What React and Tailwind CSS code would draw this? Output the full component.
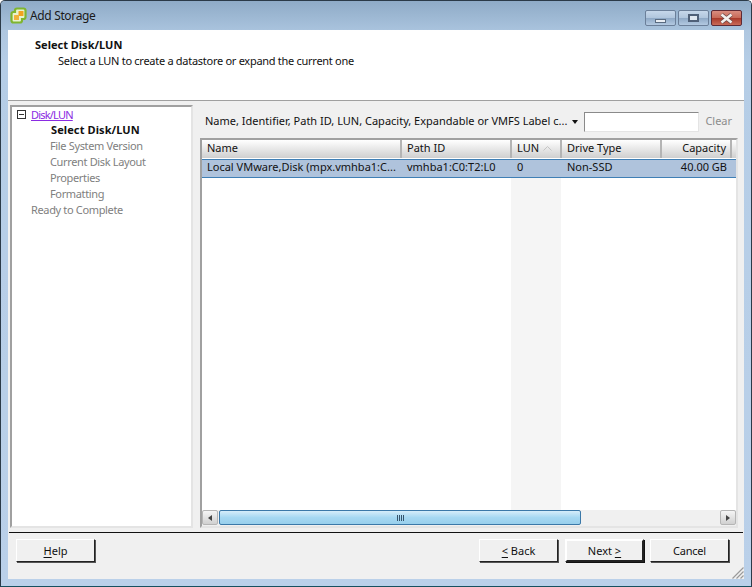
const font = { fontFamily: '"Noto Sans", sans-serif' };

function Mnemonic({ children }) {
  return <span className="underline underline-offset-2">{children}</span>;
}

function WizardButton({ children, isDefault, className = "" }) {
  return (
    <button
      className={`h-[23px] w-[79px] bg-[#f0f0f0] text-[11px] text-[#111] border border-t-white border-l-white border-r-[#222] border-b-[#222] ${
        isDefault ? "border-2 border-t-[#111] border-l-[#111] border-r-[#111] border-b-[#111] shadow-[1px_1px_0_#111]" : "shadow-[1px_1px_0_#555]"
      } ${className}`}
    >
      {children}
    </button>
  );
}

function VmIcon() {
  return (
    <svg width="17" height="17" viewBox="0 0 17 17">
      <path
        d="M7 1.5 H13.5 Q15.5 1.5 15.5 3.5 V10 Q15.5 12 13.5 12 H12 V13.5 Q12 15.5 10 15.5 H3.5 Q1.5 15.5 1.5 13.5 V7 Q1.5 5 3.5 5 H5 V3.5 Q5 1.5 7 1.5 Z"
        fill="#e9f3cf"
        stroke="#7fb52f"
        strokeWidth="2.2"
      />
      <rect x="8.5" y="4" width="5" height="5" rx="0.5" fill="#f2a31f" />
      <rect x="4" y="8" width="5" height="5" rx="0.5" fill="#f0b23c" />
    </svg>
  );
}

function TitleButton({ red, children }) {
  return (
    <div
      className={`h-[16px] w-[31px] flex items-center justify-center rounded-[2px] border ${
        red
          ? "border-[#5e2a35] bg-[linear-gradient(#d98d80,#c86a58_48%,#a93a2b_52%,#c96a58)]"
          : "border-[#6b7f99] bg-[linear-gradient(#c6d7ea,#b1c6dd_48%,#8fa9c6_52%,#b3c9e1)]"
      }`}
    >
      {children}
    </div>
  );
}

const columns = [
  { name: "Name", width: "w-[200px]" },
  { name: "Path ID", width: "w-[110px]" },
  { name: "LUN", width: "w-[50px]", sorted: true },
  { name: "Drive Type", width: "w-[100px]" },
  { name: "Capacity", width: "w-[70px]", right: true },
];

const steps = ["File System Version", "Current Disk Layout", "Properties", "Formatting"];

export default function App() {
  return (
    <div
      style={font}
      className="relative w-[752px] h-[587px] flex flex-col border border-[#2b3a48] border-b-[#17505f] rounded-t-[5px] bg-[linear-gradient(#a9c1da,#b5cde6_60px,#bad0e9)] overflow-hidden text-[11px] leading-[16px] text-[#111]"
    >
      {/* title bar */}
      <div className="h-[29px] shrink-0 flex items-center pl-[9px] pr-[9px] bg-[linear-gradient(#8fabc7,#a9c3dd)]">
        <VmIcon />
        <span className="ml-[3px] text-[12px] tracking-[-0.35px] text-[#1a1a1a]">Add Storage</span>
        <div className="ml-auto flex gap-[2px] self-start mt-[9px]">
          <TitleButton>
            <div className="w-[11px] h-[4px] mt-[5px] bg-[#e8edf3] border border-[#5a6b80]" />
          </TitleButton>
          <TitleButton>
            <div className="w-[11px] h-[8px] border-2 border-[#4f6078] bg-[#dfe7f0]" />
          </TitleButton>
          <TitleButton red>
            <svg width="15" height="11" viewBox="0 0 15 11">
              <path d="M2.5 1.5 L12.5 9.5 M12.5 1.5 L2.5 9.5" stroke="#6b4a4a" strokeWidth="4" />
              <path d="M2.5 1.5 L12.5 9.5 M12.5 1.5 L2.5 9.5" stroke="#f4f0ee" strokeWidth="2.6" />
            </svg>
          </TitleButton>
        </div>
      </div>

      {/* client area */}
      <div className="flex-1 mx-[7px] mb-[7px] flex flex-col bg-[#f0f0f0] min-h-0">
        <div className="h-[71px] shrink-0 bg-white pl-[27px] pt-[7px] border-b border-[#a0a0a0]">
          <div className="font-bold leading-[16px]">Select Disk/LUN</div>
          <div className="pl-[23px] leading-[16px] tracking-[-0.28px]">Select a LUN to create a datastore or expand the current one</div>
        </div>

        <div className="flex-1 min-h-0 flex pl-[2px] pr-[6px] pt-[4px]">
          {/* steps */}
          <div className="w-[183px] h-[423px] bg-white border-2 border-[#a0a0a0] border-r-[#e4e4e4] border-b-[#e4e4e4] pl-[5px] text-[#808080] tracking-[-0.35px]">
            <div className="flex items-center h-[15px]">
              <div className="w-[9px] h-[9px] border border-[#333] flex items-center justify-center">
                <div className="w-[5px] h-px bg-[#333]" />
              </div>
              <span className="ml-[5px] text-[#8a2be2] underline tracking-[-0.8px]">Disk/LUN</span>
            </div>
            <div className="pl-[34px] font-bold text-[#111] tracking-[0.1px]">Select Disk/LUN</div>
            {steps.map((step) => (
              <div key={step} className="pl-[33px]">{step}</div>
            ))}
            <div className="pl-[14px]">Ready to Complete</div>
          </div>

          {/* right pane */}
          <div className="flex-1 min-w-0 ml-[7px] flex flex-col h-[423px]">
            <div className="h-[33px] shrink-0 flex items-center pl-[5px] pt-[1px]">
              <span className="pb-[2px]">Name, Identifier, Path ID, LUN, Capacity, Expandable or VMFS Label c...</span>
              <span className="ml-[5px] w-0 h-0 border-x-[3px] border-x-transparent border-t-[4px] border-t-[#111]" />
              <div className="ml-[6px] w-[115px] h-[20px] bg-white border border-[#8a8a8a] border-r-[#e4e4e4] border-b-[#e4e4e4]" />
              <span className="ml-[6px] pb-[2px] text-[#8c8c8c]">Clear</span>
            </div>

            <div className="flex-1 min-h-0 flex flex-col bg-white border-2 border-[#a0a0a0] border-r-[#e4e4e4] border-b-[#e4e4e4]">
              {/* header */}
              <div className="h-[18px] shrink-0 flex pb-[2px] bg-[linear-gradient(#ffffff,#ececec_40%,#cfcfcf)]">
                {columns.map((col) => (
                  <div
                    key={col.name}
                    className={`${col.width} flex items-center border-r-2 border-[#b4b4b4] -mb-[2px] pb-[2px] ${col.right ? "justify-end pl-[5px] pr-[4px]" : "px-[5px]"}`}
                  >
                    {col.name}
                    {col.sorted && (
                      <svg className="ml-[4px]" width="9" height="5" viewBox="0 0 9 5">
                        <path d="M0.5 4.5 L4.5 0.5 L8.5 4.5" fill="none" stroke="#c4c4c4" />
                      </svg>
                    )}
                  </div>
                ))}
              </div>
              {/* selected row */}
              <div className="h-[19px] shrink-0 mt-[1px] pb-[3px] flex items-center bg-[#afc3dc] border-y border-[#3f7fb5]">
                <div className="w-[200px] px-[5px] truncate">Local VMware,Disk (mpx.vmhba1:C...</div>
                <div className="w-[110px] px-[5px]">vmhba1:C0:T2:L0</div>
                <div className="w-[50px] px-[5px]">0</div>
                <div className="w-[100px] px-[5px]">Non-SSD</div>
                <div className="w-[70px] px-[5px] text-right">40.00 GB</div>
              </div>
              {/* empty area, LUN column is the sorted one so it stays shaded */}
              <div className="flex-1 min-h-0 flex">
                <div className="w-[309px]" />
                <div className="w-[50px] bg-[#f5f5f5]" />
              </div>
              {/* scrollbar */}
              <div className="h-[16px] shrink-0 flex items-start bg-[#f0f0f0]">
                <div className="w-[16px] h-[15px] flex items-center justify-center rounded-[2px] border border-[#b5b5b5] bg-[linear-gradient(#f5f5f5,#d0d0d0)]">
                  <span className="w-0 h-0 border-y-[3px] border-y-transparent border-r-[4px] border-r-[#444]" />
                </div>
                <div className="ml-[1px] w-[362px] h-[15px] flex items-center justify-center gap-px rounded-[2px] border border-[#3b78a8] bg-[linear-gradient(#d6edfa,#a6d8f2_50%,#98cfec)]">
                  <span className="w-px h-[6px] bg-[#35536b]" />
                  <span className="w-px h-[6px] bg-[#35536b]" />
                  <span className="w-px h-[6px] bg-[#35536b]" />
                  <span className="w-px h-[6px] bg-[#35536b]" />
                </div>
                <div className="ml-auto w-[16px] h-[15px] flex items-center justify-center rounded-[2px] border border-[#b5b5b5] bg-[linear-gradient(#f5f5f5,#d0d0d0)]">
                  <span className="w-0 h-0 border-y-[3px] border-y-transparent border-l-[4px] border-l-[#444]" />
                </div>
              </div>
            </div>
          </div>
        </div>

        {/* footer */}
        <div className="h-[47px] shrink-0 border-t border-[#111] mx-px flex items-start pt-[6px] pl-[7px] pr-[14px]">
          <WizardButton><Mnemonic>H</Mnemonic>elp</WizardButton>
          <div className="ml-auto flex gap-[6px]">
            <WizardButton><Mnemonic>&lt;</Mnemonic> Back</WizardButton>
            <WizardButton isDefault className="ml-px">Next <Mnemonic>&gt;</Mnemonic></WizardButton>
            <WizardButton className="tracking-[-0.2px]">Cancel</WizardButton>
          </div>
        </div>
      </div>

      {/* resize grip */}
      <svg className="absolute right-[7px] bottom-[7px]" width="12" height="12" viewBox="0 0 12 12">
        <path d="M0.5 11.5 L11.5 0.5 M4.5 11.5 L11.5 4.5 M8.5 11.5 L11.5 8.5" stroke="#9a9a9a" strokeWidth="1.2" />
      </svg>
    </div>
  );
}
